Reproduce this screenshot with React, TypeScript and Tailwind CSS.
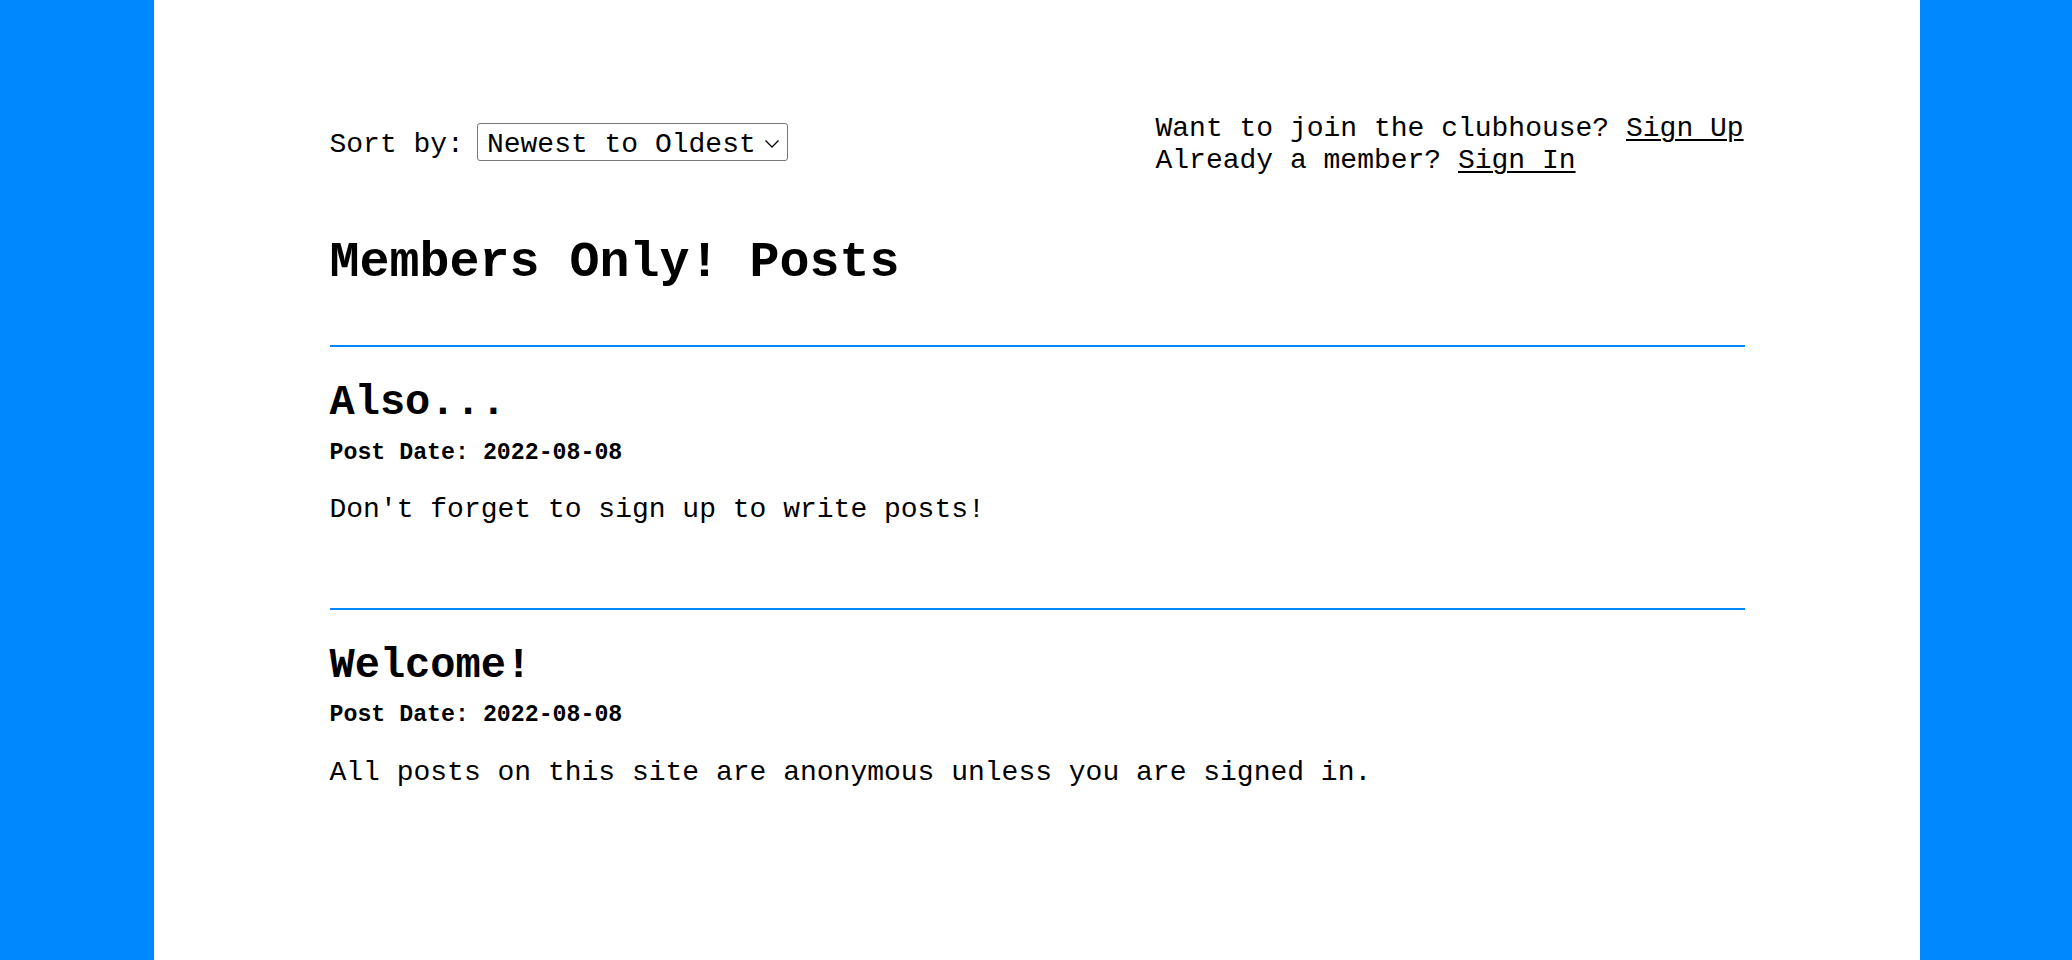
import React from "react";

const posts = [
  { title: "Also...", date: "2022-08-08", body: "Don't forget to sign up to write posts!" },
  { title: "Welcome!", date: "2022-08-08", body: "All posts on this site are anonymous unless you are signed in." },
];

export default function App() {
  return (
    <div
      className="min-h-[960px] w-full bg-[#0088ff] flex"
      style={{ fontFamily: '"Liberation Mono", "Courier New", monospace' }}
    >
      <div className="ml-[154px] w-[1766px] min-h-[960px] bg-white text-black">
        <div className="mx-auto w-[1415px]">
          <header className="mt-[113px] flex items-center justify-between text-[28px] leading-[1.133]">
            <div className="flex items-center">
              <span className="mr-[13px]">Sort by:</span>
              <div className="relative -mt-[5px] w-[311px] h-[38px] border border-[#767676] rounded-[3px] bg-white flex items-center">
                <span className="relative top-[3px] pl-[9px] whitespace-pre">Newest to Oldest</span>
                <svg
                  className="absolute right-[7px] top-[15px]"
                  width="16"
                  height="10"
                  viewBox="0 0 16 10"
                  fill="none"
                  stroke="#000"
                  strokeWidth="1.3"
                >
                  <path d="M1.5 1.5 L8 8 L14.5 1.5" />
                </svg>
              </div>
            </div>
            <div className="w-[589px] whitespace-pre">
              <div>
                Want to join the clubhouse? <a href="#" className="underline underline-offset-[3px] decoration-[1.5px]">Sign Up</a>
              </div>
              <div>
                Already a member? <a href="#" className="underline underline-offset-[3px] decoration-[1.5px]">Sign In</a>
              </div>
            </div>
          </header>

          <h1 className="mt-[59px] text-[50px] font-bold leading-[1.133]">Members Only! Posts</h1>

          <div className="mt-[53px]">
            {posts.map((p) => (
              <section key={p.title} className="border-t-2 border-[#0088ff] pt-[33px] pb-[82px]">
                <h2 className="text-[42px] font-bold leading-[1.133]">{p.title}</h2>
                <h5 className="mt-[12px] text-[23.24px] font-bold leading-[1.133]">Post Date: {p.date}</h5>
                <p className="mt-[28px] text-[28px] leading-[1.133]">{p.body}</p>
              </section>
            ))}
          </div>
        </div>
      </div>
    </div>
  );
}
